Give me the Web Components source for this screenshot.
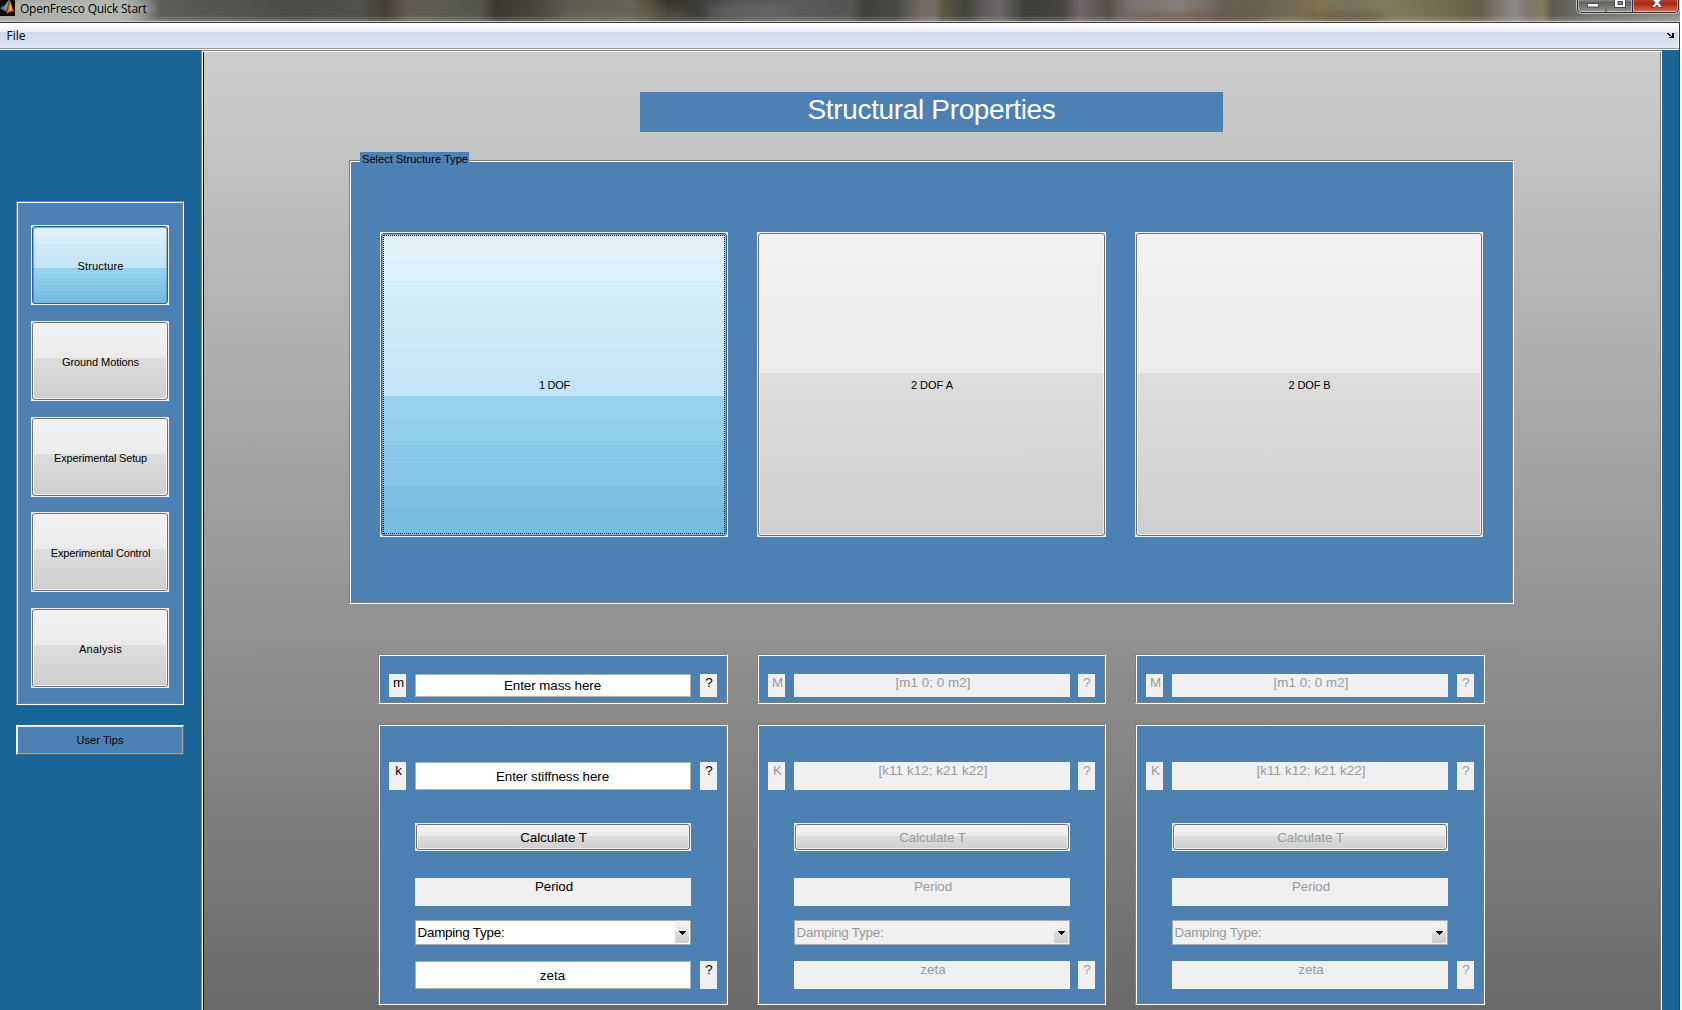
<!DOCTYPE html>
<html lang="en">
<head>
<meta charset="utf-8">
<title>OpenFresco Quick Start</title>
<style>
html,body{margin:0;height:1010px;overflow:hidden;background:#fff}
body{font-family:"Liberation Sans",Arial,sans-serif;font-size:11px;color:#000}
</style>
</head>
<body>
<app-window></app-window>
<script>
const define = (name, html, ready) => customElements.define(name, class extends HTMLElement {
  connectedCallback() {
    if (this.shadowRoot) return;
    const root = this.attachShadow({ mode: 'open' });
    const t = document.createElement('template');
    t.innerHTML = typeof html === 'function' ? html(this) : html;
    root.append(t.content.cloneNode(true));
    if (ready) ready(this, root);
  }
});

/* Text run tracked to a given advance width. */
define('fit-text', `<style>:host{display:inline-block;white-space:pre;flex:none}</style><slot></slot>`, el => {
  const w = +el.getAttribute('w'), n = el.textContent.length;
  if (w) el.style.letterSpacing = ((w - el.getBoundingClientRect().width) / n) + 'px';
});

/* Etched frame: grey/white double line. */
define('etched-panel', `<style>
:host{display:flex;flex-direction:column;box-sizing:border-box;flex:none;border:1px solid;border-color:#7d7d7d #fff #fff #7d7d7d}
.in{flex:1;display:flex;flex-direction:column;box-sizing:border-box;border:1px solid;border-color:#fff #7d7d7d #7d7d7d #fff;background:#4d81b4;min-height:0}
</style><div class="in"><slot></slot></div>`);

define('push-button', `<style>
:host{display:block;box-sizing:border-box;flex:none;padding:1px;background:#f0f0f0}
.b{height:100%;box-sizing:border-box;border:1px solid #707070;border-radius:3px;background:linear-gradient(#f2f2f2,#ebebeb 46.3%,#dddddd 46.3%,#cfcfcf);box-shadow:inset 0 0 0 1px #f7f7f7cc;display:flex;align-items:center;justify-content:center;position:relative;padding:var(--nudge,2px) 0 0 1px}
:host([selected]) .b{border-color:#2c628b;box-shadow:inset 1px 1px 1px #4d7c94aa,inset -1px 0 1px #4d7c9488;
background:linear-gradient(#e1f2fa 8%,#dbf0fa 8% 15.5%,#d4eef9 15.5% 23%,#d0ebf8 23% 31%,#cbe9f7 31% 38.5%,#c7e7f6 38.5% 46%,#c3e5f5 46% 53.8%,#98d1ef 53.8% 61.2%,#93cdec 61.2% 68.7%,#8ac8ea 68.7% 76.1%,#84c4e7 76.1% 83.7%,#7ec0e4 83.7% 91%,#77bce1 91%)}
:host([focused]) .b::after{content:"";position:absolute;inset:1px;border:1px dotted #000}
:host([disabled]) .b{color:#9a9a9a}
slot{display:block}
</style><div class="b"><slot></slot></div>`);

define('title-bar', `<style>
:host{display:flex;height:21px;width:1680px;position:relative;overflow:hidden;flex:none;align-items:flex-start;
background:
linear-gradient(#0000 70%,#ffffff30),
linear-gradient(90deg,#a3a39d 0,#a9aaa6 125px,#85867f 143px,#5c5c58 160px,#53534f 230px,#4b4b47 290px,#51514b 360px,#453f33 385px,#625d50 408px,#5b5c4f 440px,#54564c 480px,#3c3730 497px,#46443a 530px,#5d5b4f 570px,#666453 630px,#56513d 648px,#36332d 668px,#3e3f3c 700px,#535453 740px,#5a5b5b 790px,#555653 850px,#3f413a 865px,#454840 895px,#766b67 922px,#726e69 935px,#5b583f 942px,#43433b 965px,#615d5d 985px,#6b6769 1000px,#3e3f38 1025px,#45443f 1062px,#706668 1080px,#555149 1108px,#7c7074 1130px,#85807a 1180px,#787068 1205px,#656153 1225px,#6a644f 1260px,#746a53 1295px,#817752 1320px,#78725b 1345px,#837a5f 1385px,#77704f 1430px,#655d48 1480px,#7c7567 1496px,#8c8788 1515px,#7c7470 1530px,#877a5c 1543px,#5c5a50 1552px,#6d6d68 1580px,#8b8b87 1680px)}
.spot{position:absolute;filter:blur(5px);border-radius:50%}
.t{font:12px/17px "Open Sans","Noto Sans",sans-serif;margin:0 0 0 5px;position:relative;z-index:1}
svg{display:block;position:relative}
.ctl{margin-left:auto;display:flex;width:102px;height:13px;box-sizing:border-box;border:1px solid #2e2e2e;border-top:0;border-radius:0 0 5px 5px;box-shadow:0 0 0 1px #d6d6d6cc;margin-right:1px;overflow:hidden;position:relative}
</style>
<i class="spot" style="left:560px;top:8px;width:130px;height:14px;background:#6d6c5a88"></i>
<i class="spot" style="left:705px;top:4px;width:90px;height:16px;background:#70707088"></i>
<i class="spot" style="left:1120px;top:14px;width:150px;height:10px;background:#6a4b3aaa"></i>
<i class="spot" style="left:1300px;top:13px;width:90px;height:9px;background:#65503aaa"></i>
<i class="spot" style="left:0;top:1px;width:155px;height:15px;background:#c3c4c2aa"></i>
<svg width="15" height="16" viewBox="0 0 15 16"><rect width="15" height="16" fill="#080706"/><path d="M0 8 4.5 5.5 7 8.5 4.5 11Z" fill="#3d8db0"/><path d="M4.5 5.5 C7 4 7.5 0 9.5 0 L7.5 9 4.5 11 5.5 8Z" fill="#68b3b6"/><path d="M4.5 11 C8 9 8 0 9.5 0 L9.7 9 7 14 5.8 11.5Z" fill="#a63c1d"/><path d="M9.5 0 C11.5 3 12.5 9.5 14.5 12.5 C12 10.5 10.5 10.5 7 14 C9 9 9 3 9.5 0Z" fill="#ea732b"/><path d="M9.6 1 C10.2 4 10 8 9 11 L11.5 9Z" fill="#f8bd69"/></svg>
<span class="t"><fit-text w="126.500">OpenFresco Quick Start</fit-text></span>
<div class="ctl"><svg width="100" height="12" viewBox="0 0 100 12">
<defs><linearGradient id="g" x2="0" y2="1"><stop offset="0" stop-color="#8d8d8b"/><stop offset=".2" stop-color="#62635f"/><stop offset="1" stop-color="#94948f"/></linearGradient>
<linearGradient id="r" x2="0" y2="1"><stop offset="0" stop-color="#b5452c"/><stop offset=".3" stop-color="#ad2410"/><stop offset="1" stop-color="#d4725a"/></linearGradient></defs>
<rect width="55" height="12" fill="url(#g)"/><rect x="55" width="45" height="12" fill="url(#r)"/>
<path d="M.5 0V9Q.5 11.5 3 11.5H27.5V0M28.5 0V11.5H53.5V0M55.5 0V11.5H97Q99.5 11.5 99.5 9V0" fill="none" stroke="#ffffff77"/>
<path d="M28 0V12M54.500 0V12" stroke="#333"/>
<rect x="9.500" y="3.500" width="11" height="3.500" fill="#fff" stroke="#4b4c5c"/>
<path d="M36.500 -1H47.500V7.500H36.500Z" fill="#fff" stroke="#4b4c5c"/><rect x="40" y="1.500" width="4.500" height="3" fill="#86867f" stroke="#4b4c5c"/>
<path d="M73.500 -1 77 2.500 73.500 7.500H77L79 5 81 7.500H84.500L81 2.500 84.500 -1Z" fill="#fff" stroke="#4b4c5c"/>
</svg></div>`);

define('menu-bar', `<style>
:host{display:flex;flex:none;height:25px;width:1678px;justify-content:space-between;align-items:flex-start;border-right:1px solid #f4f5f9;
background:linear-gradient(#fff 0,#fdfdfe 3px,#e6ebf4 9px,#d4d8eb 9px,#d5daec 14px,#dfe6f5 25px);font:12px/16px "Open Sans","Noto Sans",sans-serif}
.f{margin:5px 0 0 6.5px}
svg{display:block;margin:10px 4px 0 0}
</style><span class="f"><fit-text w="19">File</fit-text></span>
<svg width="7" height="5" viewBox="0 0 7 5" shape-rendering="crispEdges"><path d="M0 0h2v1h1v1h1v1h1V0h2v5H2V4h2V3H2V2H1V1H0z"/></svg>`);

define('nav-rail', `<style>
:host{display:flex;flex-direction:column;flex:none;width:201px;background:#1a6597;align-items:flex-start;padding:151px 0 0 16px;box-sizing:border-box}
etched-panel{width:168px;height:504px}
.l{display:flex;flex-direction:column;gap:16px;padding:22px 13px}
push-button{height:80px;width:138px}
.tips{margin-top:20px;width:168px;height:30px;box-sizing:border-box;border:1px solid;border-color:#fff #696969 #696969 #fff;display:flex}
.tips div{flex:1;border:1px solid;border-color:#e3e3e3 #a0a0a0 #a0a0a0 #e3e3e3;background:#4d81b4;display:flex;align-items:center;justify-content:center}
</style><etched-panel><div class="l">
<push-button selected><fit-text w="46">Structure</fit-text></push-button>
<push-button><fit-text w="77">Ground Motions</fit-text></push-button>
<push-button><fit-text w="93">Experimental Setup</fit-text></push-button>
<push-button style="margin-top:-1px"><fit-text w="99.500">Experimental Control</fit-text></push-button>
<push-button><fit-text w="43">Analysis</fit-text></push-button>
</div></etched-panel><div class="tips"><div><fit-text w="47">User Tips</fit-text></div></div>`);

/* Flat label / read-only box and white edit box. */
define('text-box', `<style>
:host{display:flex;justify-content:center;box-sizing:border-box;flex:none;background:#f0f0f0;font-size:13.4px;line-height:16px;height:100%;width:276px;padding-top:1px;padding-left:2px}
:host([narrow]){width:17px;padding-left:1px}
:host([edit]){background:#fff;border:1px solid;border-color:#abadb3 #b3b1ad #b3b1ad #abadb3;align-items:center;padding:1px 1px 0 0}
:host([off]){color:#9a9a9a}
</style><slot></slot>`);

define('drop-down', `<style>
:host{display:flex;box-sizing:border-box;flex:none;height:25px;width:276px;background:#fff;border:1px solid #aaa;font-size:13.4px;line-height:16px;align-items:center;justify-content:space-between;padding-left:1.5px}
:host([off]){background:#f0f0f0;color:#9a9a9a}
.a{width:14px;height:21px;margin-right:1px;display:flex;align-items:center;justify-content:center;background:linear-gradient(#f2f2f2,#ebebeb 48%,#dcdcdc 48%,#cfcfcf);border-radius:0 2px 2px 0}
</style><slot></slot><span class="a"><svg width="7" height="4" viewBox="0 0 7 4" shape-rendering="crispEdges"><path fill="#000" d="M0 0h7v1H6v1H5v1H4v1H3V3H2V2H1V1H0z"/></svg></span>`);

define('property-column', el => {
  const off = el.hasAttribute('off') ? 'off' : '', ed = off ? 'off' : 'edit';
  const q = `<text-box narrow ${off}><fit-text>?</fit-text></text-box>`;
  const a = n => el.getAttribute(n);
  return `<style>
:host{display:flex;flex-direction:column;flex:none;width:${a('width')}px;gap:20px}
etched-panel{width:100%}
.m{height:50px}.k{height:281px}
.row{display:flex;gap:0 9px;padding-left:9px;height:28px}
.row text-box:nth-child(3),.row .last{margin-left:${a('shift') || 0}px}
.name{padding-left:2px}
.in{padding-left:35px}
push-button,drop-down{width:276px;font-size:13.4px;line-height:16px}
push-button{height:28px;--nudge:1px}
</style>
<etched-panel class="m"><div class="row" style="height:23px;margin-top:18px">
<text-box class="name" narrow ${off}><fit-text>${a('m')}</fit-text></text-box>
<text-box ${ed} style="padding-top:${off ? 1 : 0}px"><fit-text w="${a('mw')}">${a('mt')}</fit-text></text-box>${q}</div></etched-panel>
<etched-panel class="k"><div class="row" style="margin-top:36px">
<text-box class="name" narrow ${off}><fit-text>${a('k')}</fit-text></text-box>
<text-box ${ed}><fit-text w="${a('kw')}">${a('kt')}</fit-text></text-box>${q}</div>
<div class="in" style="margin-top:33px"><push-button ${off ? 'disabled' : ''}><fit-text w="66.500">Calculate T</fit-text></push-button></div>
<div class="in" style="margin-top:27px;height:28px"><text-box ${off}><fit-text w="38">Period</fit-text></text-box></div>
<div class="in" style="margin-top:14px"><drop-down ${off}><fit-text w="87">Damping Type:</fit-text></drop-down></div>
<div class="row" style="margin-top:16px;padding-left:35px"><text-box ${ed}><fit-text w="25.500">zeta</fit-text></text-box><text-box class="last" narrow ${off}><fit-text>?</fit-text></text-box></div>
</etched-panel>`;
});

define('structure-page', `<style>
:host{display:flex;flex-direction:column;box-sizing:border-box;flex:none;width:1461px;border-left:1px solid #8b8b83;border-top:1px solid #7e7e7e}
.in{flex:1;display:flex;flex-direction:column;box-sizing:border-box;border:1px solid #fff;border-bottom:0}
.bg{flex:1;display:flex;flex-direction:column;border-left:1px solid #000;border-right:1px solid #7e7e7e;background:linear-gradient(#cdcdcd,#6a6a6a);min-height:0}
h1{margin:40px 0 0 436px;width:583px;height:40px;background:#4d81b4;color:#fff;font-weight:400;font-size:28px;line-height:36px;display:flex;justify-content:center}
.sel{margin:28px 0 0 145px;width:1165px;height:444px;position:relative}
.cap{position:absolute;left:10px;top:-9px;height:14px;line-height:14px;background:#4d81b4;padding:0 1px 0 2px}
.btns{display:flex;padding:70px 0 0 29px;gap:29px}
push-button{width:348px;height:305px;--nudge:1px}
.cols{display:flex;margin:50px 0 0 174px}
</style><div class="in"><div class="bg">
<h1><fit-text w="248">Structural Properties</fit-text></h1>
<etched-panel class="sel"><span class="cap"><fit-text w="106">Select Structure Type</fit-text></span>
<div class="btns"><push-button selected focused><fit-text w="31">1 DOF</fit-text></push-button>
<push-button style="width:349px"><fit-text w="42">2 DOF A</fit-text></push-button><push-button><fit-text w="42">2 DOF B</fit-text></push-button></div></etched-panel>
<div class="cols">
<property-column width="350" m="m" mt="Enter mass here" mw="97" k="k" kt="Enter stiffness here" kw="113"></property-column>
<property-column style="margin-left:29px" off shift="-1" width="349" m="M" mt="[m1 0; 0 m2]" mw="75" k="K" kt="[k11 k12; k21 k22]" kw="109"></property-column>
<property-column style="margin-left:29px" off width="350" m="M" mt="[m1 0; 0 m2]" mw="75" k="K" kt="[k11 k12; k21 k22]" kw="109"></property-column>
</div></div></div>`);

define('app-window', `<style>
:host{display:flex;flex-direction:column;width:1680px;height:1010px;overflow:hidden}
.edge{height:1px;background:#c9c9c6;flex:none}
.client{flex:1;display:flex;flex-direction:column;border-top:1px solid #3c3c3c;border-right:1px solid #3c3c3c;min-height:0}
.rule{flex:none;height:1px;background:#fff;border-top:1px solid #979797}
.main{flex:1;display:flex;min-height:0;background:#1a6597}
</style><title-bar></title-bar><div class="edge"></div>
<div class="client"><menu-bar></menu-bar><div class="rule"></div>
<div class="main"><nav-rail></nav-rail><structure-page></structure-page></div></div>`);
</script>
</body>
</html>
